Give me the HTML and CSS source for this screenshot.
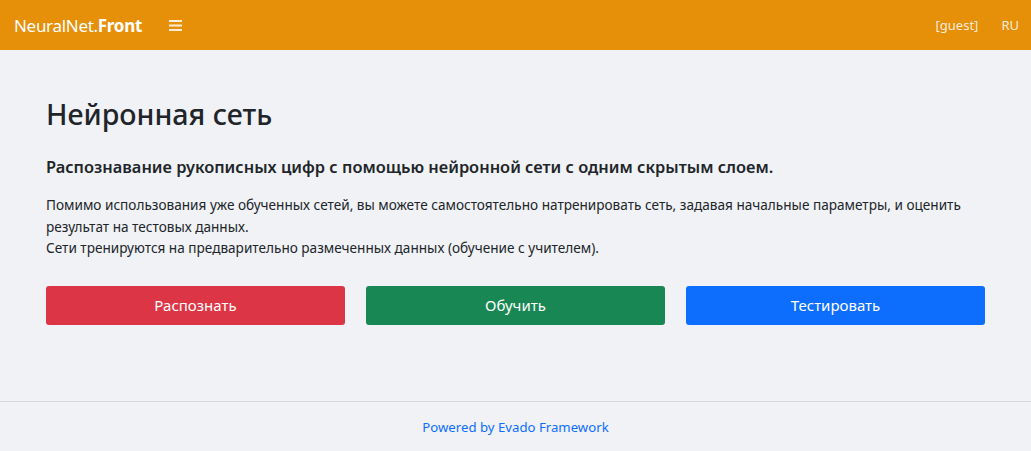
FILE: index.html
```html
<!DOCTYPE html>
<html lang="ru">
<head>
<meta charset="utf-8">
<title>NeuralNet.Front</title>
<link rel="stylesheet" href="styles.css">
</head>
<body>
<header class="navbar">
  <div class="nav-left">
    <a class="brand" href="#">NeuralNet.<b>Front</b></a>
    <button class="burger" aria-label="menu">
      <svg width="13" height="11" viewBox="0 0 13 11"><rect x="0" y="0" width="13" height="2" fill="#fff" opacity="0.85"/><rect x="0" y="4.5" width="13" height="2" fill="#fff" opacity="0.85"/><rect x="0" y="9" width="13" height="2" fill="#fff" opacity="0.85"/></svg>
    </button>
  </div>
  <nav class="nav-right">
    <a href="#">[guest]</a>
    <a href="#">RU</a>
  </nav>
</header>
<main class="content">
  <h1 class="title">Нейронная сеть</h1>
  <h2 class="subtitle">Распознавание рукописных цифр с помощью нейронной сети с одним скрытым слоем.</h2>
  <p class="lead">Помимо использования уже обученных сетей, вы можете самостоятельно натренировать сеть, задавая начальные параметры, и оценить<br>результат на тестовых данных.<br>Сети тренируются на предварительно размеченных данных (обучение с учителем).</p>
  <div class="actions">
    <a class="btn btn-red" href="#">Распознать</a>
    <a class="btn btn-green" href="#">Обучить</a>
    <a class="btn btn-blue" href="#">Тестировать</a>
  </div>
</main>
<footer class="footer">
  <a href="#">Powered by Evado Framework</a>
</footer>
</body>
</html>
```
FILE: styles.css
```css
* { box-sizing: border-box; }
html, body { margin: 0; padding: 0; }
body {
  font-family: "Noto Sans", "Open Sans", sans-serif;
  background: #f0f2f6;
  color: #212529;
  height: 451px;
  display: flex;
  flex-direction: column;
}
a { text-decoration: none; }
.navbar {
  height: 50px;
  background: #e69009;
  display: flex;
  align-items: center;
  justify-content: space-between;
  padding: 0 12px 0 14px;
}
.nav-left { display: flex; align-items: center; }
.brand { color: #fff; font-size: 17px; letter-spacing: -0.3px; }
.brand b { font-weight: 700; }
.burger {
  background: none; border: 0; padding: 0; margin-left: 27px;
  display: flex; align-items: center; cursor: pointer;
}
.nav-right { display: flex; align-items: center; gap: 23px; }
.nav-right a { color: rgba(255,255,255,0.85); font-size: 13px; }
.content {
  flex: 1;
  padding: 0 46px;
}
.title {
  font-size: 28.6px;
  font-weight: 500;
  margin: 45px 0 0;
  line-height: 38px;
}
.subtitle {
  font-size: 16.4px;
  font-weight: 600;
  margin: 21px 0 0;
  line-height: 26px;
}
.lead {
  font-size: 13.6px;
  line-height: 21.5px;
  margin: 14px 0 0;
}
.actions {
  display: grid;
  grid-template-columns: repeat(3, 1fr);
  gap: 21px;
  margin-top: 27px;
}
.btn {
  height: 39px;
  border-radius: 3px;
  color: #fff;
  font-size: 15px;
  display: flex;
  align-items: center;
  justify-content: center;
}
.btn-red { background: #dc3545; }
.btn-green { background: #198754; }
.btn-blue { background: #0d6efd; }
.footer {
  height: 50px;
  border-top: 1px solid #d6d8dc;
  display: flex;
  align-items: center;
  justify-content: center;
}
.footer a { color: #0d6efd; font-size: 13.2px; }
```
